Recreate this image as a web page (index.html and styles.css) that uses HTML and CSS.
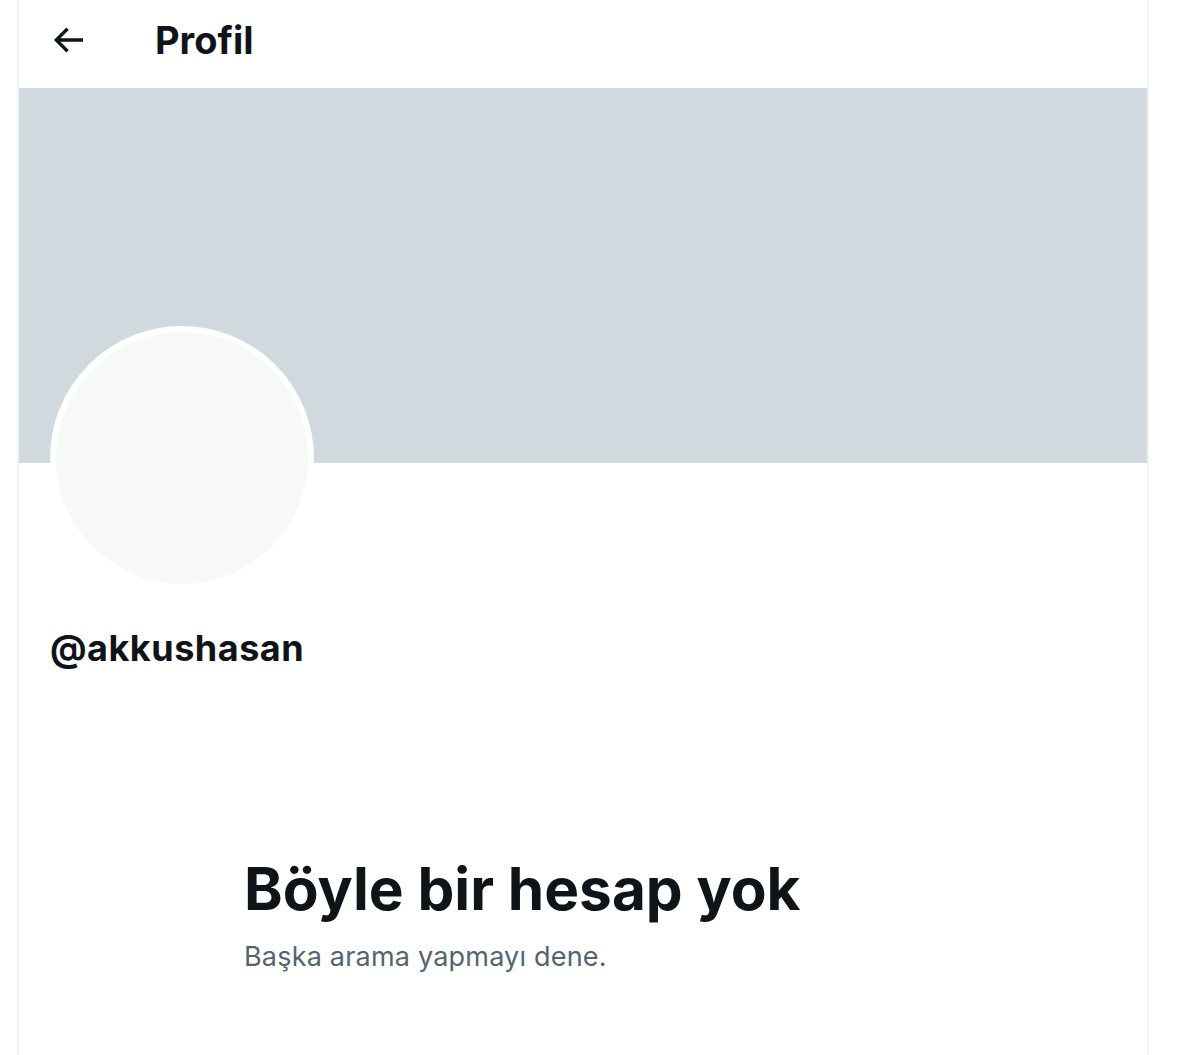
FILE: index.html
```
<!DOCTYPE html>
<html lang="tr">
<head>
  <meta charset="UTF-8">
  <title>Profil</title>
  <link rel="stylesheet" href="styles.css">
</head>
<body>
  <div class="column">
    <div class="topbar">
      <button class="back-button" aria-label="Geri">
        <svg viewBox="0 0 24 24" width="40" height="40"><path d="M7.414 13l5.043 5.04-1.414 1.42L3.586 12l7.457-7.46 1.414 1.42L7.414 11H21v2H7.414z"/></svg>
      </button>
      <h2 class="title">Profil</h2>
    </div>

    <div class="banner"></div>

    <div class="profile">
      <div class="avatar"></div>
      <div class="handle">@akkushasan</div>
    </div>

    <div class="empty-state">
      <h1>Böyle bir hesap yok</h1>
      <p>Başka arama yapmayı dene.</p>
    </div>
  </div>
</body>
</html>
```

FILE: styles.css
```
body {
  margin: 0;
  background-color: #ffffff;
  color: #0f1419;
  font-family: Inter, Roboto, "Liberation Sans", sans-serif;
}

.column {
  margin-left: 17px;
  width: 1128px;
  min-height: 1055px;
  border-left: 2px solid #eff3f4;
  border-right: 2px solid #eff3f4;
}

.topbar {
  box-sizing: border-box;
  height: 88px;
  padding-bottom: 8px;
  display: flex;
  align-items: center;
}

.back-button {
  margin-left: 29px;
  width: 40px;
  height: 40px;
  padding: 0;
  border: none;
  background: transparent;
  display: flex;
  align-items: center;
  justify-content: center;
  color: #0f1419;
}

.back-button svg {
  fill: currentColor;
}

.title {
  margin: 0 0 0 67px;
  font-size: 38px;
  font-weight: 700;
}

.banner {
  height: 375px;
  background-color: #cfd9de;
}

.profile {
  padding-left: 31px;
}

.avatar {
  width: 252px;
  height: 252px;
  margin-top: -137px;
  border: 6px solid #ffffff;
  border-radius: 50%;
  background-color: #f7f9f9;
}

.handle {
  margin-top: 36px;
  font-size: 36px;
  font-weight: 700;
  letter-spacing: 0.5px;
}

.empty-state {
  padding: 184px 0 0 225px;
}

.empty-state h1 {
  margin: 0;
  font-size: 58.5px;
  font-weight: 700;
  line-height: 1.2;
}

.empty-state p {
  margin: 16px 0 0;
  font-size: 27px;
  letter-spacing: 0.2px;
  color: #536471;
}
```
